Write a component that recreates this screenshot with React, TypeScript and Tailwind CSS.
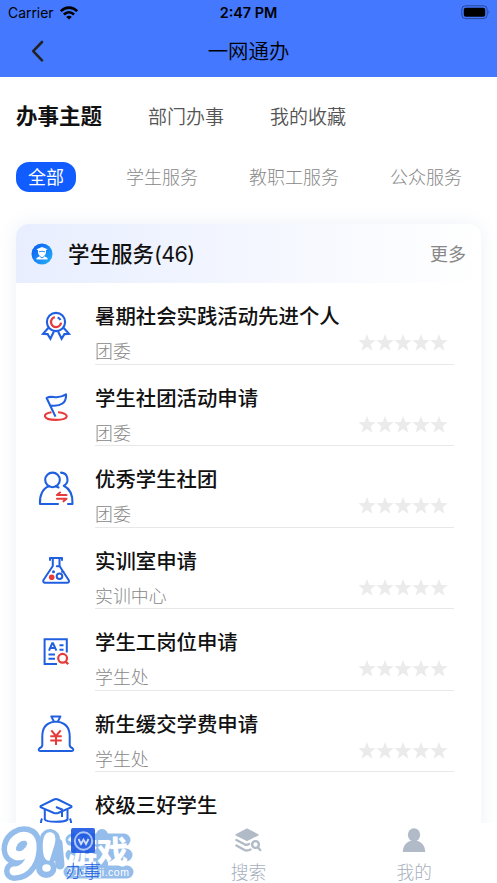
import type { ReactNode } from "react";

const blue = "#1f5fe0";
const red = "#e63b3b";

function MedalIcon() {
  return (
    <svg width="30" height="30" viewBox="0 0 30 30" fill="none" stroke={blue} strokeWidth="2.1">
      <circle cx="15" cy="11" r="9.1" />
      <path d="M7.5 16.7 L2 22.8 L6.6 23.1 L9.4 27.7 L13 20.3 M22.5 16.7 L28 22.8 L23.4 23.1 L20.6 27.7 L17 20.3" />
      <path d="M13.8 6.2 A5 5 0 1 0 20 11.6" stroke={red} strokeWidth="2.3" />
      <path d="M16.6 6.4 A5.2 5.2 0 0 1 19.5 9" />
    </svg>
  );
}

function FlagIcon() {
  return (
    <svg width="30" height="30" viewBox="0 0 30 30" fill="none" strokeWidth="2.1" strokeLinejoin="round">
      <path d="M10.5 19.2 C1 20.2 1 26.8 15 26.9 C29 26.8 29 20.2 17 19.2" stroke={red} />
      <path d="M14.5 23.6 L5.6 5 C11 1.4 16 7.6 25 1.4 C25.5 9.6 20 13.8 10.2 12.6" stroke={blue} />
    </svg>
  );
}

function PeopleIcon() {
  return (
    <svg width="38" height="36" viewBox="0 0 38 36" fill="none" stroke={blue} strokeWidth="2.1" strokeLinecap="round" strokeLinejoin="round">
      <circle cx="15.5" cy="8.9" r="7.3" />
      <path d="M21 33 H3 C2.5 24 6 17 12 15.2 M19 15.2 L21.5 16.5" />
      <path d="M24 1.6 C31.5 2 32.5 12 26.8 14.7 C33.5 18 36 24 35.5 33 H31" />
      <path d="M20 24 H29.5 M20 24 L23 21.5 M20 27.7 H29.5 L26.5 30.3" stroke={red} />
    </svg>
  );
}

function FlaskIcon() {
  return (
    <svg width="30" height="30" viewBox="0 0 30 30" fill="none" stroke={blue} strokeWidth="2" strokeLinecap="round" strokeLinejoin="round">
      <path d="M9 3.9 V2 H21 V3.9 M11.8 2.5 V10 L2.3 24.2 Q2 26.8 4 26.8 H26 Q28.6 26.8 27.8 24.2 L18.5 10 V2.5 M15.8 10.2 H19 M21 15.8 H22.5" />
      <circle cx="18.5" cy="20.3" r="2.8" />
      <circle cx="10.7" cy="21.3" r="2.8" fill={red} stroke="none" />
      <circle cx="12.5" cy="15.8" r="1.5" fill={blue} stroke="none" />
    </svg>
  );
}

function ResumeIcon() {
  return (
    <svg width="30" height="30" viewBox="0 0 30 30" fill="none" stroke={blue} strokeWidth="2">
      <path d="M16 27 H3.6 V2.3 H25.8 V15.5" />
      <path d="M8 13.6 L11.2 6.3 H12 L15.4 13.6 M9.2 11 H14.2 M18.5 8.3 H22.5 M18.5 12.7 H22.5 M7.5 17.5 H14 M7.5 21.8 H14" />
      <circle cx="21.6" cy="21.3" r="4.4" stroke={red} strokeWidth="2.2" />
      <path d="M24.5 24.5 L27.2 27.2" stroke={red} strokeWidth="2.4" />
    </svg>
  );
}

function MoneyBagIcon() {
  return (
    <svg width="38" height="38" viewBox="0 0 38 38" fill="none" stroke={blue} strokeWidth="2" strokeLinejoin="round">
      <path d="M14.3 1.4 H23.4 L20.8 6.8 H17 Z M17 6.8 C8.5 8 5.3 14.5 5.3 21.5 V30 C5.3 32 4.5 32.5 2.5 33.2 C1.2 34.2 1.6 36 3.2 36 H34.8 C36.4 36 36.8 34.2 35.5 33.2 C33.5 32.5 32.7 32 32.7 30 V21.5 C32.7 14.5 29.5 8 20.8 6.8" />
      <path d="M14.3 15.3 L19 21 L23.7 15.3 M19 20.5 V30 M13.3 21.3 H24.7 M13.3 25.5 H24.7" stroke={red} />
    </svg>
  );
}

function CapIcon() {
  return (
    <svg width="36" height="36" viewBox="0 0 36 36" fill="none" stroke={blue} strokeWidth="2" strokeLinejoin="round">
      <path d="M18 2 Q19 2 20 2.5 L33 8.9 Q34.2 9.7 33 10.4 L20 16 Q18 16.7 16 16 L3 10.4 Q1.8 9.7 3 8.9 L16 2.5 Q17 2 18 2 Z" />
      <path d="M6.8 12.2 V22.5 C9 25.5 27 25.5 29.5 22.5 V12.2 M18 10 L24 12.5 V20" />
      <path d="M4 21.5 C2 26 2 34 9 35 M32 21.5 C34 26 34 34 27 35" />
    </svg>
  );
}

type Service = { name: string; dept: string; icon: ReactNode };

const services: Service[] = [
  { name: "暑期社会实践活动先进个人", dept: "团委", icon: <MedalIcon /> },
  { name: "学生社团活动申请", dept: "团委", icon: <FlagIcon /> },
  { name: "优秀学生社团", dept: "团委", icon: <PeopleIcon /> },
  { name: "实训室申请", dept: "实训中心", icon: <FlaskIcon /> },
  { name: "学生工岗位申请", dept: "学生处", icon: <ResumeIcon /> },
  { name: "新生缓交学费申请", dept: "学生处", icon: <MoneyBagIcon /> },
  { name: "校级三好学生", dept: "学生处", icon: <CapIcon /> },
];

function Stars() {
  return (
    <div className="flex">
      {[1, 2, 3, 4, 5].map((n) => (
        <svg key={n} width="18" height="18" viewBox="0 0 18 18" fill="#ebebeb">
          <path d="M9 .1 L11.3 6 L17.7 6.2 L12.6 10.3 L14.5 16.8 L9 13.1 L3.5 16.8 L5.4 10.3 L.3 6.2 L6.7 6 Z" />
        </svg>
      ))}
    </div>
  );
}

function StatusBar() {
  return (
    <div className="grid h-[26px] grid-cols-3 items-center pl-2 pr-[6px] pt-px font-['Inter',sans-serif] text-[13.9px] leading-none text-black">
      <div className="flex items-center gap-[6px]">
        <span>Carrier</span>
        <svg className="-mt-[2px]" width="18" height="14" viewBox="0 0 18 14" fill="none" stroke="#000" strokeWidth="2.6">
          <path d="M.8 5.2 C5.5 .4 12.5 .4 17.2 5.2" />
          <path d="M3.9 8.5 C7 5.6 11 5.6 14.1 8.5" />
          <path d="M9 13.5 L6.2 10.9 C7.8 9.4 10.2 9.4 11.8 10.9 Z" fill="#000" stroke="none" />
        </svg>
      </div>
      <span className="pr-[2px] text-center text-[14.4px] font-semibold">2:47 PM</span>
      <svg className="-mt-[2px] justify-self-end" width="30" height="15" viewBox="0 0 30 15">
        <rect x=".8" y=".8" width="25.4" height="12.8" rx="3.8" fill="none" stroke="#000" strokeOpacity=".4" />
        <rect x="2.8" y="2.7" width="21.4" height="9" rx="2" />
        <path d="M27.6 5 Q29.2 7.2 27.6 9.4 Z" opacity=".5" />
      </svg>
    </div>
  );
}

// Site stamp laid over the left end of the tab bar
function Watermark() {
  return (
    <svg className="absolute bottom-0 left-0" width="140" height="60" viewBox="0 -4 140 60">
      <g fill="none" stroke="#94bdec" strokeLinecap="round" strokeLinejoin="round">
        <path d="M32 17 C31 8 23 8 18 11 C11 15 9 25 15 28 C22 31 30 25 32 17 C33 32 26 44 14 44" strokeWidth="20" />
        <path d="M50 12 L47 28 M46 41 L46.5 41" strokeWidth="20" />
        <path d="M58 16 L60 38" strokeWidth="9" />
        <path d="M72 13 H124 M72 28 H126 M70 45 H127" strokeWidth="13" />
        <path d="M102 8 V40" strokeWidth="12" />
      </g>
      <g fill="none" stroke="#fff" strokeLinecap="round" strokeLinejoin="round">
        <path d="M32 17 C31 8 23 8 18 11 C11 15 9 25 15 28 C22 31 30 25 32 17 C33 32 26 44 14 44" strokeWidth="9" />
        <path d="M50 6 C54.5 6 55.5 11 54 17 L49 33 C45 33 43.5 28 43.5 19 C43.5 11 45.5 6 50 6 Z" fill="#fff" strokeWidth="1.5" />
        <ellipse cx="46.5" cy="41" rx="3.5" ry="3" fill="#fff" strokeWidth="1.5" />
      </g>
      <text x="66" y="35.5" fontSize="31" fontWeight="900" fill="#fff" textLength="62">游戏</text>
      <g opacity=".88">
        <rect x="71" y="1" width="24" height="25" rx="2" fill="#1552e2" />
        <circle cx="83.5" cy="14" r="8.7" fill="none" stroke="#cbdcf8" strokeOpacity=".8" strokeWidth="2" />
        <path d="M78.5 12 L81 17 L83.5 12.5 L86 17 L88.5 12" fill="none" stroke="#cbdcf8" strokeWidth="1.8" />
      </g>
      <text x="67" y="49" fontSize="10.5" fill="#fff" textLength="62" fontFamily="Liberation Sans, sans-serif">91danji.com</text>
      <text x="65.5" y="50.5" fontSize="17.7" fill="#2562e2">办事</text>
    </svg>
  );
}

function BottomNav() {
  return (
    <nav className="relative grid h-[60px] shrink-0 grid-cols-3 bg-white text-[17.7px] leading-[22px] font-light text-[#a6b0bd]">
      <div />
      <div className="flex flex-col items-center pt-[4px]">
        <svg width="28" height="27" viewBox="0 0 28 27" fill="none" stroke="#b1bbc7" strokeWidth="2.4" strokeLinecap="round" strokeLinejoin="round">
          <path d="M13 2 L24 7.8 L13 13.5 L2 7.8 Z" fill="#b1bbc7" strokeWidth="1.4" />
          <path d="M2.4 13 L10.5 17.3 Q13 18.3 15 17 M2.4 18.5 L10.5 23 Q13 24.2 16.5 22.5" />
          <circle cx="21.5" cy="17.5" r="3.4" />
          <path d="M24 20.5 L26.2 23" />
        </svg>
        <span className="mt-[6px]">搜索</span>
      </div>
      <div className="flex flex-col items-center pt-[4px]">
        <svg width="26" height="27" viewBox="0 0 26 27" fill="#b1bbc7">
          <ellipse cx="13" cy="7.8" rx="6.2" ry="6.6" />
          <path d="M1.8 25 C1.8 18.2 6 14.5 10 13.7 H16 C20 14.5 24.2 18.2 24.2 25 Z" />
        </svg>
        <span className="mt-[6px]">我的</span>
      </div>
      <Watermark />
    </nav>
  );
}

export default function App() {
  return (
    <main className="flex h-[883px] w-[497px] flex-col overflow-hidden bg-white font-['Noto_Sans_CJK_SC',sans-serif] text-[#111]">
      <header className="h-[77px] shrink-0 bg-[#4378ff]">
        <StatusBar />
        <div className="grid h-[49px] grid-cols-[82px_1fr_82px] items-center">
          <svg className="ml-[30px]" width="16" height="24" viewBox="0 0 16 24" fill="none" stroke="#222" strokeWidth="2.6" strokeLinecap="round" strokeLinejoin="round">
            <path d="M12 3 L3.2 12.2 L12 21.4" />
          </svg>
          <h1 className="text-center text-[20.4px] leading-none font-[350] text-black">一网通办</h1>
        </div>
      </header>

      <div className="flex h-[76px] shrink-0 items-center gap-[46px] pl-4 text-[19px] leading-none font-[350] text-[#555]">
        <span className="text-[21.5px] font-bold text-[#111]">办事主题</span>
        <span>部门办事</span>
        <span>我的收藏</span>
      </div>

      <div className="mt-px flex h-[46px] shrink-0 items-center px-4 text-[18px] leading-none font-light text-[#888]">
        <span className="flex h-[30px] w-[60px] items-center justify-center rounded-[13px] bg-[#105cff] pb-[2px] font-normal text-white">全部</span>
        <span className="ml-[50px] pb-[2px]">学生服务</span>
        <span className="ml-[51px] pb-[2px]">教职工服务</span>
        <span className="ml-[51px] pb-[2px]">公众服务</span>
      </div>

      <div className="min-h-0 flex-1 overflow-hidden px-4 pt-6">
        <section className="h-[700px] rounded-t-[13px] bg-white shadow-[0_0_20px_rgba(60,100,170,0.09)]">
          <div className="flex h-[59px] items-center rounded-t-[13px] bg-linear-to-r from-[#e8eeff] to-white px-[15px]">
            <svg width="22" height="22" viewBox="0 0 22 22">
              <defs>
                <linearGradient id="badge" x1="0" y1="0" x2="1" y2="1">
                  <stop stopColor="#0758f5" />
                  <stop offset="1" stopColor="#27b4f7" />
                </linearGradient>
              </defs>
              <circle cx="11" cy="11" r="10.5" fill="url(#badge)" />
              <path d="M11 4 L16.5 6.2 L15 7.2 V9.8 Q14.5 12.5 12.8 13 L16.5 15 V16.5 H5.5 V15 L9.2 13 Q7.3 12 7 9.8 V7.2 L5.5 6.2 Z" fill="#fff" />
              <path d="M8 8.8 Q11 7.8 14 8.8 M9 13.5 L11 15 L13 13.5" stroke="#1a83f6" strokeWidth=".9" fill="none" />
            </svg>
            <h2 className="ml-[15px] text-[21.5px] leading-none font-medium">
              学生服务<span className="font-['Inter',sans-serif] text-[21.5px] tracking-[-0.6px] font-normal">(46)</span>
            </h2>
            <span className="ml-auto pb-[2px] text-[18px] leading-none text-[#888]">更多</span>
          </div>

          {services.map((item) => (
            <div key={item.name} className="flex h-[81.5px]">
              <div className="flex w-[79px] items-center justify-center pt-[5px]">{item.icon}</div>
              <div className="flex w-[359px] flex-col border-b-[1.5px] border-[#e8e8e8] pt-[19px]">
                <h3 className="text-[20.4px] leading-[26px] font-medium">{item.name}</h3>
                <div className="flex justify-between pr-[6px]">
                  <span className="pt-[11px] text-[17.9px] leading-[22px] font-light text-[#888]">{item.dept}</span>
                  <div className="pt-[6px]">
                    <Stars />
                  </div>
                </div>
              </div>
            </div>
          ))}
        </section>
      </div>
      <BottomNav />
    </main>
  );
}
